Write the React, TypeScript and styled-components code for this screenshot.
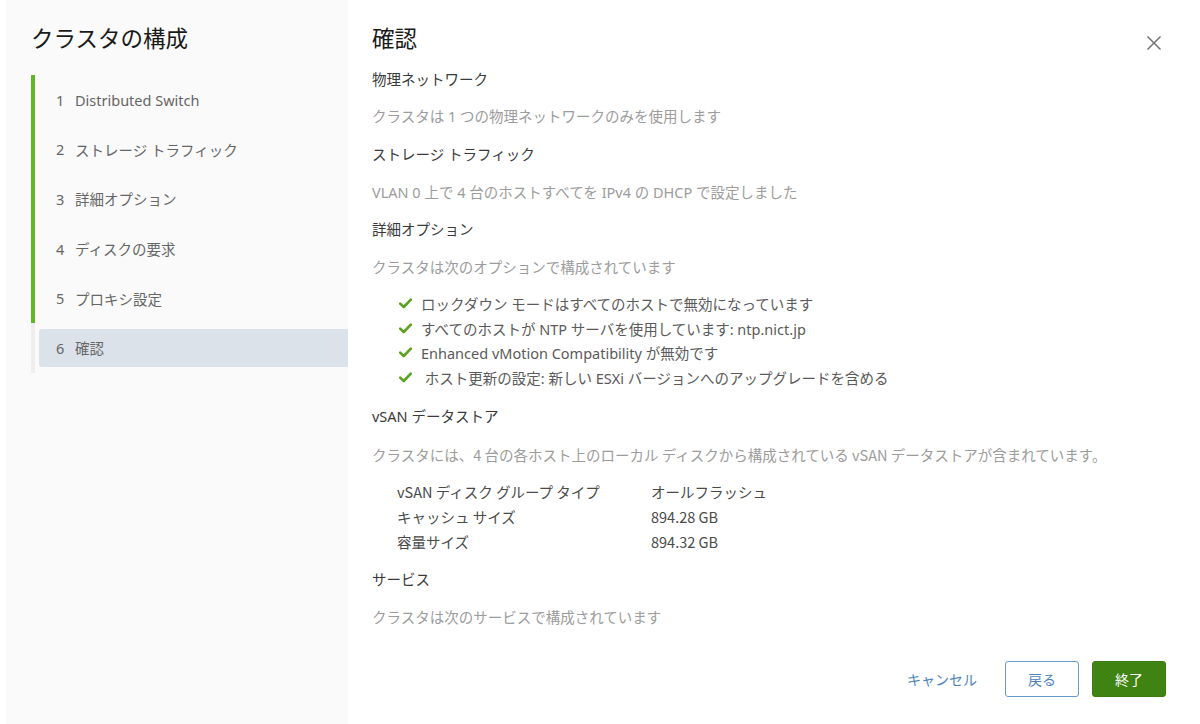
import styled, { createGlobalStyle } from "styled-components";

const GlobalStyle = createGlobalStyle`
  html, body {
    margin: 0;
    padding: 0;
    background: #ffffff;
  }
  body {
    font-family: "Noto Sans", "Noto Sans CJK JP", sans-serif;
    color: #333333;
  }
`;

const steps = [
  "Distributed Switch",
  "ストレージ トラフィック",
  "詳細オプション",
  "ディスクの要求",
  "プロキシ設定",
  "確認",
];

const checks = [
  "ロックダウン モードはすべてのホストで無効になっています",
  "すべてのホストが NTP サーバを使用しています: ntp.nict.jp",
  "Enhanced vMotion Compatibility が無効です",
  "\u00a0ホスト更新の設定: 新しい ESXi バージョンへのアップグレードを含める",
];

const specs = [
  ["vSAN ディスク グループ タイプ", "オールフラッシュ"],
  ["キャッシュ サイズ", "894.28 GB"],
  ["容量サイズ", "894.32 GB"],
];

const CheckIcon = () => (
  <svg width="13" height="11" viewBox="0 0 13 11">
    <path d="M1.2 5.6 L4.8 9 L11.8 1.6" fill="none" stroke="#5aa220" strokeWidth="2.6" strokeLinecap="round" strokeLinejoin="round" />
  </svg>
);

const CloseIcon = () => (
  <svg width="16" height="16" viewBox="0 0 16 16">
    <path d="M1.5 1.5 L14.5 14.5 M14.5 1.5 L1.5 14.5" stroke="#737373" strokeWidth="1.5" />
  </svg>
);

export default function App() {
  return (
    <>
      <GlobalStyle />
      <Page>
        <Sidebar>
          <SideTitle>クラスタの構成</SideTitle>
          <StepList>
            {steps.map((s, i) => (
              <Step key={s} $done={i < 5}>
                <StepLabel $active={i === 5}>
                  <StepNum>{i + 1}</StepNum>
                  {s}
                </StepLabel>
              </Step>
            ))}
          </StepList>
        </Sidebar>

        <Main>
          <TitleRow>
            <Title>確認</Title>
            <CloseButton aria-label="close">
              <CloseIcon />
            </CloseButton>
          </TitleRow>

          <Heading $gap={14.5}>物理ネットワーク</Heading>
          <Desc>クラスタは 1 つの物理ネットワークのみを使用します</Desc>

          <Heading>ストレージ トラフィック</Heading>
          <Desc>VLAN 0 上で 4 台のホストすべてを IPv4 の DHCP で設定しました</Desc>

          <Heading>詳細オプション</Heading>
          <Desc>クラスタは次のオプションで構成されています</Desc>
          <CheckList>
            {checks.map((c) => (
              <CheckItem key={c}>
                <CheckIcon />
                <span>{c}</span>
              </CheckItem>
            ))}
          </CheckList>

          <Heading $gap={14}>vSAN データストア</Heading>
          <Desc $narrow>クラスタには、4 台の各ホスト上のローカル ディスクから構成されている vSAN データストアが含まれています。</Desc>
          <SpecTable>
            {specs.map(([k, v]) => (
              <SpecRow key={k}>
                <SpecKey>{k}</SpecKey>
                <SpecValue>{v}</SpecValue>
              </SpecRow>
            ))}
          </SpecTable>

          <Heading $narrow>サービス</Heading>
          <Desc $narrow>クラスタは次のサービスで構成されています</Desc>

          <Footer>
            <FlatButton>キャンセル</FlatButton>
            <OutlineButton>戻る</OutlineButton>
            <PrimaryButton>終了</PrimaryButton>
          </Footer>
        </Main>
      </Page>
    </>
  );
}

const Page = styled.div`
  display: flex;
  width: 1200px;
  height: 724px;
  padding-left: 6px;
  box-sizing: border-box;
  overflow: hidden;
`;

const Sidebar = styled.aside`
  width: 342px;
  flex-shrink: 0;
  background: #fafafa;
  padding: 21px 0 0 25px;
  box-sizing: border-box;
`;

const SideTitle = styled.h2`
  margin: 0;
  font-size: 22.5px;
  font-weight: 400;
  line-height: 32px;
  color: #1a1a1a;
  font-family: "Noto Sans CJK JP", sans-serif;
`;

const StepList = styled.div`
  margin-top: 22px;
  display: flex;
  flex-direction: column;
`;

const Step = styled.div<{ $done: boolean }>`
  height: 49.6px;
  border-left: 4px solid ${(p) => (p.$done ? "#62b42a" : "#eeeeee")};
  padding: 6px 0 6px 4px;
  box-sizing: border-box;
  display: flex;
`;

const StepLabel = styled.div<{ $active: boolean }>`
  flex: 1;
  display: flex;
  align-items: center;
  padding-left: 17px;
  border-radius: 3px 0 0 3px;
  background: ${(p) => (p.$active ? "#dbe2e9" : "transparent")};
  font-size: 14.5px;
  color: #666666;
`;

const StepNum = styled.span`
  width: 19px;
`;

const Main = styled.main`
  flex: 1;
  display: flex;
  flex-direction: column;
  padding: 0 34px 27px 24px;
  font-size: 14.5px;
`;

const TitleRow = styled.div`
  display: flex;
  align-items: center;
  justify-content: space-between;
  margin-top: 22px;
  height: 30px;
`;

const Title = styled.h1`
  margin: 0;
  font-size: 22.5px;
  font-weight: 400;
  line-height: 30px;
  color: #1a1a1a;
  font-family: "Noto Sans CJK JP", sans-serif;
`;

const CloseButton = styled.button`
  border: none;
  background: none;
  padding: 0;
  margin: 12px 4px 0 0;
  display: flex;
  cursor: pointer;
`;

const Heading = styled.div<{ $gap?: number; $narrow?: boolean }>`
  margin-top: ${(p) => p.$gap ?? 12.5}px;
  line-height: 25px;
  color: #3a3a3a;
  font-family: ${(p) => (p.$narrow ? '"Noto Sans CJK JP", sans-serif' : '"Noto Sans", "Noto Sans CJK JP", sans-serif')};
`;

const Desc = styled.div<{ $narrow?: boolean }>`
  margin-top: 12.75px;
  line-height: 25px;
  color: #9c9c9c;
  font-family: ${(p) => (p.$narrow ? '"Noto Sans CJK JP", sans-serif' : '"Noto Sans", "Noto Sans CJK JP", sans-serif')};
`;

const CheckList = styled.ul`
  list-style: none;
  margin: 11.5px 0 0;
  padding: 0 0 0 27px;
`;

const CheckItem = styled.li`
  display: flex;
  align-items: center;
  gap: 9px;
  height: 24.7px;
  color: #5a5a5a;
`;

const SpecTable = styled.div`
  margin-top: 12px;
  padding-left: 25px;
  display: flex;
  flex-direction: column;
  font-family: "Noto Sans CJK JP", sans-serif;
`;

const SpecRow = styled.div`
  display: grid;
  grid-template-columns: 254px 1fr;
  line-height: 25px;
  color: #4a4a4a;
`;

const SpecKey = styled.span``;

const SpecValue = styled.span``;

const Footer = styled.div`
  margin-top: auto;
  display: flex;
  justify-content: flex-end;
  align-items: center;
  gap: 13px;
`;

const BaseButton = styled.button`
  height: 36px;
  min-width: 74px;
  border-radius: 3px;
  font-size: 14px;
  font-family: "Noto Sans CJK JP", sans-serif;
  cursor: pointer;
  padding: 0 12px;
  box-sizing: border-box;
`;

const FlatButton = styled(BaseButton)`
  border: none;
  background: transparent;
  color: #4d84be;
  margin-right: 3px;
`;

const OutlineButton = styled(BaseButton)`
  border: 1px solid #6a9acb;
  background: #ffffff;
  color: #4d84be;
`;

const PrimaryButton = styled(BaseButton)`
  border: 1px solid #3c7d12;
  background: #3f8312;
  color: #ffffff;
`;
